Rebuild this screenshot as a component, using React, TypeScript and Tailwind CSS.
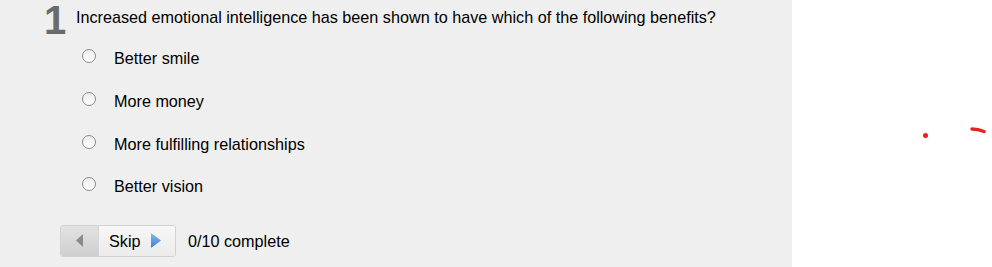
const options = [
  "Better smile",
  "More money",
  "More fulfilling relationships",
  "Better vision",
];

const Radio = () => (
  <span className="inline-block w-[14px] h-[14px] rounded-full border border-[#8a8a8a] bg-gradient-to-b from-[#ececec] to-white shrink-0" />
);

export default function App() {
  return (
    <div className="flex w-[992px] h-[267px] bg-white font-['Liberation_Sans',Arial,sans-serif] text-black overflow-hidden">
      <div className="w-[792px] h-full bg-[#efefef] pl-[44px]">
        <div className="flex items-start h-[40px]">
          <span className="text-[40px] leading-[40px] font-bold text-[#6b6b6b] w-[32px]">1</span>
          <p className="text-[16.2px] leading-[20px] pt-[7px]">
            Increased emotional intelligence has been shown to have which of the following benefits?
          </p>
        </div>
        <div className="mt-[-3px] pl-[38px] flex flex-col">
          {options.map((o) => (
            <label key={o} className="flex items-center h-[42.7px] text-[16.2px]">
              <span className="-mt-[4px] flex"><Radio /></span>
              <span className="ml-[18px]">{o}</span>
            </label>
          ))}
        </div>
        <div className="mt-[17px] ml-[16px] flex items-center">
          <div className="flex h-[32px] w-[116px] rounded-[3px] border border-[#d2d2d2] overflow-hidden">
            <div className="w-[38px] flex items-center justify-center bg-gradient-to-b from-[#e2e2e2] to-[#cfcfcf] border-r border-[#d6d6d6]">
              <svg width="7" height="13" viewBox="0 0 7 13">
                <path d="M7 0 L0 6.5 L7 13 Z" fill="#8a8a8a" />
              </svg>
            </div>
            <div className="flex-1 flex items-center pl-[10px] gap-[10px] bg-gradient-to-b from-[#f7f7f7] to-[#ebebeb] text-[16.2px]">
              <span>Skip</span>
              <svg width="10" height="15" viewBox="0 0 10 15">
                <defs>
                  <linearGradient id="bl" x1="0" y1="0" x2="0" y2="1">
                    <stop offset="0" stopColor="#8ab8ef" />
                    <stop offset="1" stopColor="#3a7fd8" />
                  </linearGradient>
                </defs>
                <path d="M0 0 L10 7.5 L0 15 Z" fill="url(#bl)" />
              </svg>
            </div>
          </div>
          <span className="ml-[12px] text-[16.2px]">0/10 complete</span>
        </div>
      </div>
      <div className="flex-1 relative">
        <span className="absolute left-[131px] top-[133px] w-[5px] h-[5px] rounded-full bg-[#e8211f]" />
        <svg className="absolute left-[178px] top-[126px]" width="16" height="10" viewBox="0 0 16 10">
          <path d="M2 3 Q8 3 14 5.5" stroke="#e8211f" strokeWidth="3.5" strokeLinecap="round" fill="none" />
        </svg>
      </div>
    </div>
  );
}
